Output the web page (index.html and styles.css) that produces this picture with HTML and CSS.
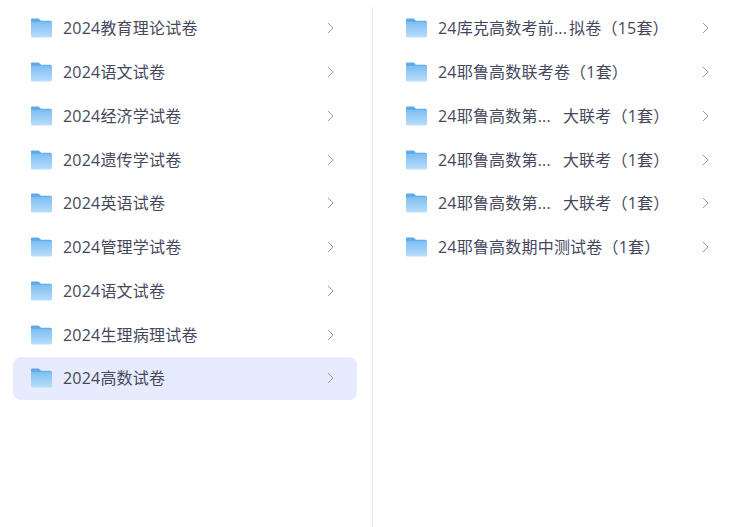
FILE: index.html
```html
<!DOCTYPE html>
<html lang="zh-CN">
<head>
  <meta charset="UTF-8" />
  <title>试卷目录</title>
  <link rel="stylesheet" href="styles.css">
</head>
<body>
  <svg class="defs" width="0" height="0" aria-hidden="true">
    <defs>
      <linearGradient id="folderFill" x1="0" y1="0" x2="0" y2="1">
        <stop offset="0" stop-color="#7dbdf1" />
        <stop offset="1" stop-color="#b9defc" />
      </linearGradient>
      <symbol id="folder" viewBox="0 0 22 20">
        <path d="M1 0h7l2.5 2.5H20a2 2 0 0 1 2 2V5H0V1a1 1 0 0 1 1-1z" fill="#5ea9e8" />
        <path d="M0 3.5h20.5A1.5 1.5 0 0 1 22 5v13.5a1.5 1.5 0 0 1-1.5 1.5h-19A1.5 1.5 0 0 1 0 18.5z" fill="url(#folderFill)" />
      </symbol>
      <symbol id="chevron" viewBox="0 0 7 12">
        <path d="M1 1l5 5-5 5" fill="none" stroke="#9a9ca6" stroke-width="1" />
      </symbol>
    </defs>
  </svg>

  <div class="columns">
    <div class="column column-left">
      <div class="row"><svg class="folder"><use href="#folder" /></svg><span class="name">2024教育理论试卷</span><svg class="chevron"><use href="#chevron" /></svg></div>
      <div class="row"><svg class="folder"><use href="#folder" /></svg><span class="name">2024语文试卷</span><svg class="chevron"><use href="#chevron" /></svg></div>
      <div class="row"><svg class="folder"><use href="#folder" /></svg><span class="name">2024经济学试卷</span><svg class="chevron"><use href="#chevron" /></svg></div>
      <div class="row"><svg class="folder"><use href="#folder" /></svg><span class="name">2024遗传学试卷</span><svg class="chevron"><use href="#chevron" /></svg></div>
      <div class="row"><svg class="folder"><use href="#folder" /></svg><span class="name">2024英语试卷</span><svg class="chevron"><use href="#chevron" /></svg></div>
      <div class="row"><svg class="folder"><use href="#folder" /></svg><span class="name">2024管理学试卷</span><svg class="chevron"><use href="#chevron" /></svg></div>
      <div class="row"><svg class="folder"><use href="#folder" /></svg><span class="name">2024语文试卷</span><svg class="chevron"><use href="#chevron" /></svg></div>
      <div class="row"><svg class="folder"><use href="#folder" /></svg><span class="name">2024生理病理试卷</span><svg class="chevron"><use href="#chevron" /></svg></div>
      <div class="row active"><svg class="folder"><use href="#folder" /></svg><span class="name">2024高数试卷</span><svg class="chevron"><use href="#chevron" /></svg></div>
    </div>
    <div class="column column-right">
      <div class="row"><svg class="folder"><use href="#folder" /></svg><span class="name">24库克高数考前...<span class="gap-small"></span>拟卷（15套）</span><svg class="chevron"><use href="#chevron" /></svg></div>
      <div class="row"><svg class="folder"><use href="#folder" /></svg><span class="name">24耶鲁高数联考卷（1套）</span><svg class="chevron"><use href="#chevron" /></svg></div>
      <div class="row"><svg class="folder"><use href="#folder" /></svg><span class="name">24耶鲁高数第...<span class="gap"></span>大联考（1套）</span><svg class="chevron"><use href="#chevron" /></svg></div>
      <div class="row"><svg class="folder"><use href="#folder" /></svg><span class="name">24耶鲁高数第...<span class="gap"></span>大联考（1套）</span><svg class="chevron"><use href="#chevron" /></svg></div>
      <div class="row"><svg class="folder"><use href="#folder" /></svg><span class="name">24耶鲁高数第...<span class="gap"></span>大联考（1套）</span><svg class="chevron"><use href="#chevron" /></svg></div>
      <div class="row"><svg class="folder"><use href="#folder" /></svg><span class="name">24耶鲁高数期中测试卷（1套）</span><svg class="chevron"><use href="#chevron" /></svg></div>
    </div>
  </div>
</body>
</html>
```

FILE: styles.css
```css
html, body {
  height: 100%;
}

body {
  margin: 0;
  background-color: #fff;
  color: #45475c;
  font-family: "Open Sans", "Noto Sans CJK SC", sans-serif;
  font-size: 16px;
  overflow: hidden;
}

.defs {
  position: absolute;
}

.columns {
  display: flex;
  height: 527px;
  box-sizing: border-box;
  padding-top: 6.6px;
}

.column-left {
  width: 373px;
  box-sizing: border-box;
  padding: 0 15px 0 13px;
  border-right: 1px solid #e6e7ea;
}

.column-right {
  flex: 1;
  padding: 0 26px 0 15px;
}

.row {
  display: flex;
  align-items: center;
  height: 43.75px;
  padding: 0 23px 0 18px;
  border-radius: 8px;
}

.column-right .row {
  padding-right: 8px;
}

.row.active {
  background-color: #e6ecfd;
}

.folder {
  width: 21px;
  height: 20px;
  flex-shrink: 0;
  margin-right: 11px;
}

.name {
  flex: 1;
  padding-bottom: 2px;
  white-space: nowrap;
  letter-spacing: 0.2px;
}

.gap {
  display: inline-block;
  width: 12px;
}

.gap-small {
  display: inline-block;
  width: 2px;
}

.chevron {
  width: 7px;
  height: 12px;
  flex-shrink: 0;
}
```
